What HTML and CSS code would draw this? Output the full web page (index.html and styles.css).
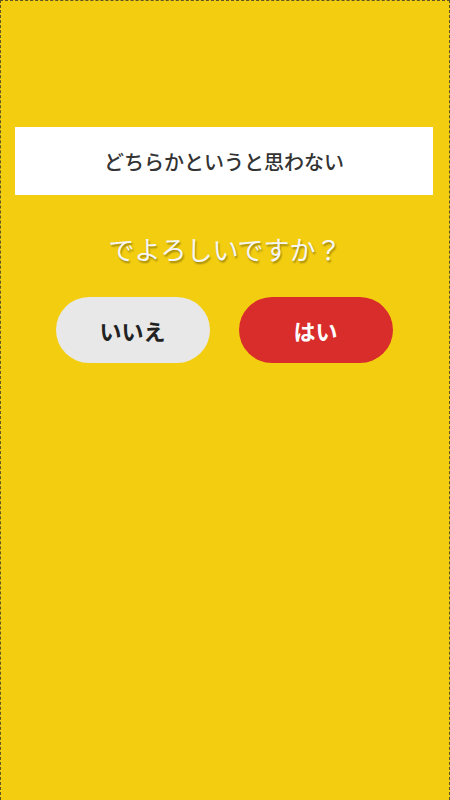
FILE: index.html
```html
<!DOCTYPE html>
<html lang="ja">
<head>
    <meta charset="UTF-8">
    <meta name="viewport" content="width=device-width, initial-scale=1.0">
    <title>確認</title>
    <link rel="stylesheet" href="styles.css">
</head>
<body>
    <div class="screen">
        <div class="answer">どちらかというと思わない</div>
        <p class="question">でよろしいですか？</p>
        <div class="buttons">
            <button class="btn no" type="button">いいえ</button>
            <button class="btn yes" type="button">はい</button>
        </div>
    </div>
</body>
</html>
```

FILE: styles.css
```css
body {
    margin: 0;
    font-family: "Noto Sans CJK JP", "Noto Sans", sans-serif;
    background-color: #f3ce10;
}
.screen {
    box-sizing: border-box;
    width: 450px;
    height: 800px;
    padding-top: 126px;
    background-color: #f3ce10;
    border: 1px dashed #5e5520;
    border-bottom: none;
    display: flex;
    flex-direction: column;
    align-items: center;
}
.answer {
    box-sizing: border-box;
    width: 418px;
    height: 68px;
    margin-left: -2px;
    background-color: white;
    color: #333;
    font-size: 20px;
    font-weight: 500;
    display: flex;
    justify-content: center;
    align-items: center;
}
.question {
    margin: 36px 0 0;
    color: #f6f6f6;
    font-size: 26px;
    line-height: 36px;
    text-shadow: 1px 2px 2px rgba(0, 0, 0, 0.35);
}
.buttons {
    display: flex;
    gap: 29px;
    margin-top: 30px;
    margin-left: -2px;
}
.btn {
    width: 154px;
    height: 66px;
    border: none;
    border-radius: 33px;
    font-family: inherit;
    font-size: 22px;
    font-weight: bold;
    cursor: pointer;
}
.btn.no {
    background-color: #e8e8e8;
    color: #222;
}
.btn.yes {
    background-color: #d92d2b;
    color: white;
}
```
